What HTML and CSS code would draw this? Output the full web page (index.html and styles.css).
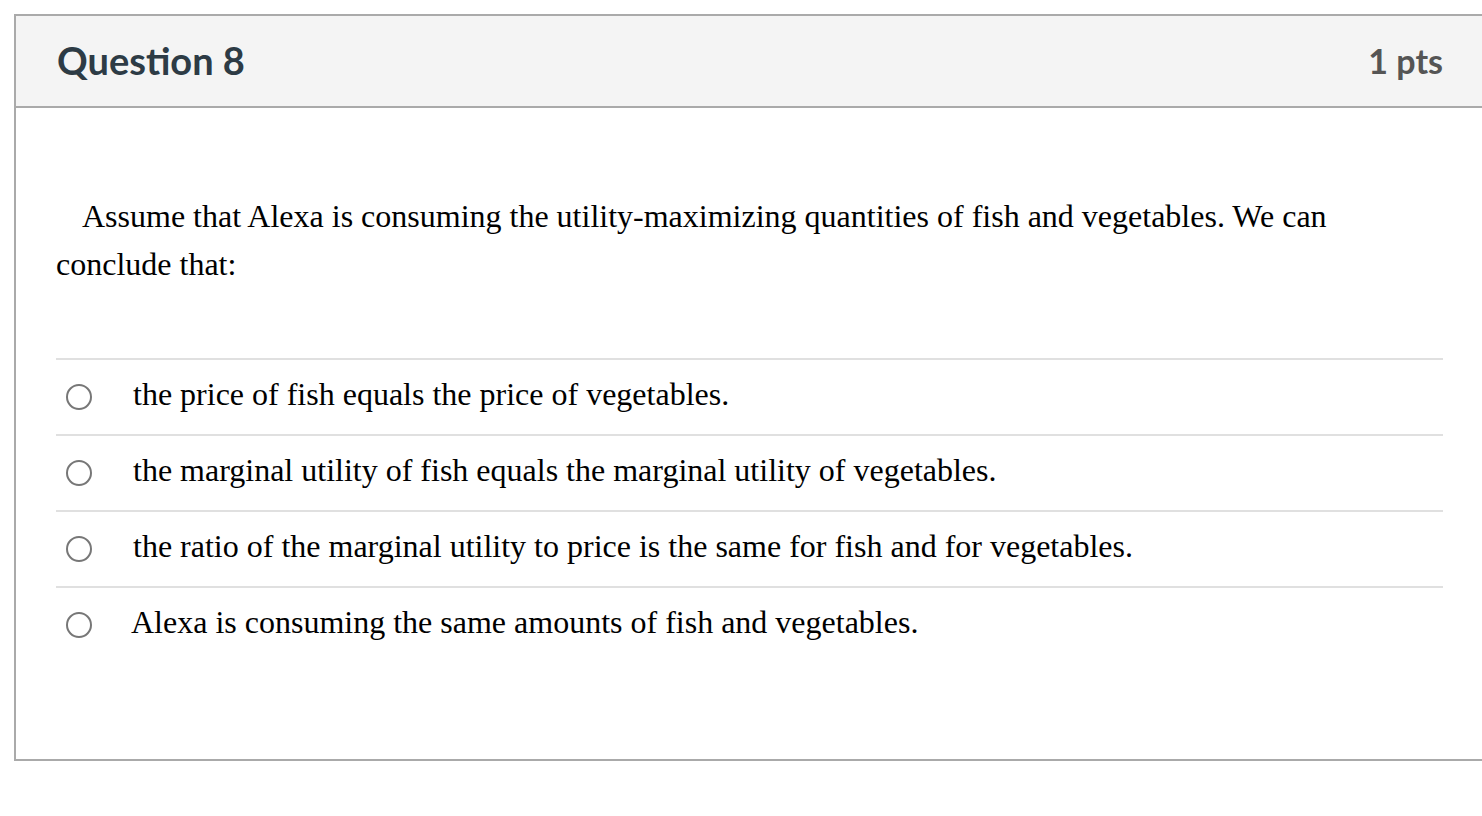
FILE: index.html
```html
<!DOCTYPE html>
<html>
<head>
<meta charset="utf-8">
<link rel="stylesheet" href="styles.css">
</head>
<body>
<div class="card">
  <div class="card-header">
    <h2 class="title">Question 8</h2>
    <span class="pts">1 pts</span>
  </div>
  <div class="card-body">
    <p class="question">Assume that Alexa is consuming the utility-maximizing quantities of fish and vegetables. We can conclude that:</p>
    <div class="answers">
      <label class="answer"><span class="radio"></span><span class="answer-text">the price of fish equals the price of vegetables.</span></label>
      <label class="answer"><span class="radio"></span><span class="answer-text">the marginal utility of fish equals the marginal utility of vegetables.</span></label>
      <label class="answer"><span class="radio"></span><span class="answer-text">the ratio of the marginal utility to price is the same for fish and for vegetables.</span></label>
      <label class="answer"><span class="radio"></span><span class="answer-text alt">Alexa is consuming the same amounts of fish and vegetables.</span></label>
    </div>
  </div>
</div>
</body>
</html>
```
FILE: styles.css
```css
html, body {
  margin: 0;
  padding: 0;
  background: #fff;
}
body {
  padding: 14px 0 0 14px;
  overflow: hidden;
}
.card {
  border: 2px solid #aaaaaa;
  border-right: none;
  width: calc(100% + 10px);
  box-sizing: border-box;
}
.card-header {
  background: #f4f4f4;
  border-bottom: 2px solid #aaaaaa;
  height: 88px;
  display: flex;
  align-items: center;
  justify-content: space-between;
  padding: 0 49px 2px 41px;
  font-family: Lato, "Open Sans", sans-serif;
  font-weight: 700;
}
.title {
  margin: 0;
  font-size: 38px;
  color: #2d3b45;
  font-weight: 700;
}
.pts {
  font-size: 34px;
  color: #555555;
}
.card-body {
  padding: 84px 49px 97px 40px;
  font-family: "Liberation Serif", "Times New Roman", serif;
  color: #000;
}
.question {
  margin: 0 0 70px 0;
  font-size: 32px;
  line-height: 48px;
  text-indent: 26px;
}
.answers {
  border-top: 2px solid #e0e0e0;
}
.answer {
  display: flex;
  align-items: center;
  height: 74px;
  border-bottom: 2px solid #e0e0e0;
  font-size: 32px;
}
.answer:last-child {
  border-bottom: none;
}
.radio {
  width: 26px;
  height: 26px;
  border: 2px solid #777;
  border-radius: 50%;
  margin-left: 10px;
  box-sizing: border-box;
  flex: none;
}
.answer-text {
  margin-left: 41px;
  margin-bottom: 5px;
}
.answer-text.alt {
  margin-left: 39px;
}
```
